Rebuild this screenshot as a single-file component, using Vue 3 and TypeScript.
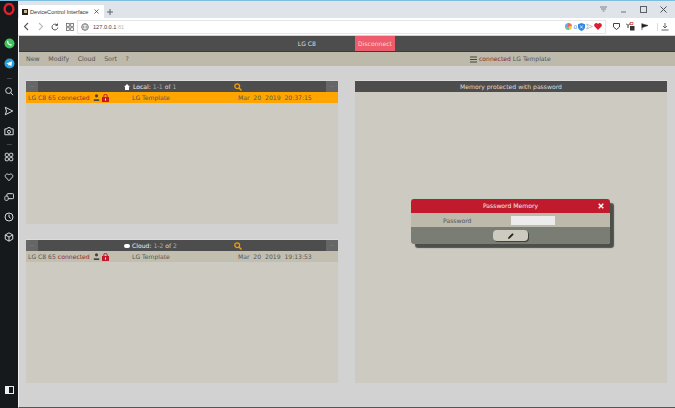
<template>
  <div class="window">
    <aside class="rail">
      <svg class="rail-logo" width="12" height="12" viewBox="0 0 12 12"><ellipse cx="6" cy="6" rx="4.4" ry="5" fill="none" stroke="#e0202c" stroke-width="2.4" /></svg>
      <svg class="rail-app" width="11" height="11" viewBox="0 0 12 12"><circle cx="6" cy="6" r="5.5" fill="#3fc35a" /><path d="M3.6 3.4c1-1 1.4.8 1.2 1.2-.3.5 1.6 2.5 2.2 2.2.5-.3 2 .3 1.4 1.2-1.6 1.8-6.4-2.6-4.8-4.6z" fill="#fff" /></svg>
      <svg class="rail-app" width="11" height="11" viewBox="0 0 12 12"><circle cx="6" cy="6" r="5.5" fill="#2a9fdb" /><path d="M2.5 6L9 3.5 8 9 6 7.500 5 8.500 4.600 6.700z" fill="#fff" /></svg>
      <div class="rail-sep"></div>
      <svg v-for="ic in railTop" :key="ic" class="rail-ico" width="10" height="10" viewBox="0 0 12 12" v-html="ic"></svg>
      <div class="rail-sep"></div>
      <svg v-for="ic in railBottom" :key="ic" class="rail-ico" width="10" height="10" viewBox="0 0 12 12" v-html="ic"></svg>
      <svg class="rail-panel" width="9" height="8" viewBox="0 0 9 8"><rect x=".5" y=".5" width="8" height="7" fill="none" stroke="#eee" /><rect x="1" y="1" width="3" height="6" fill="#eee" /></svg>
    </aside>

    <div class="browser">
      <div class="tabstrip">
        <div class="tab">
          <span class="favicon"><i></i></span>
          <span class="tab-title">DeviceControl Interface</span>
          <svg class="tab-x" width="5" height="5" viewBox="0 0 5 5"><path d="M.5.5l4 4M4.500.5l-4 4" stroke="#444" stroke-width=".8" /></svg>
        </div>
        <svg class="tab-new" width="6" height="6" viewBox="0 0 6 6"><path d="M3 0v6M0 3h6" stroke="#444" stroke-width=".8" /></svg>
        <div class="win-btns">
          <svg width="7" height="7" viewBox="0 0 7 7"><path d="M0 1h7M1 3h5M2.5 5h2" stroke="#7a828a" stroke-width="1.2" /></svg>
          <svg width="7" height="7" viewBox="0 0 7 7"><path d="M1 6h5" stroke="#6a7076" /></svg>
          <svg width="7" height="7" viewBox="0 0 7 7"><rect x=".5" y=".5" width="6" height="6" fill="none" stroke="#5a6066" /></svg>
          <svg width="7" height="7" viewBox="0 0 7 7"><path d="M.5.5l6 6M6.500.5l-6 6" stroke="#4a5056" /></svg>
        </div>
      </div>

      <div class="toolbar">
        <svg width="7" height="9" viewBox="0 0 7 9"><path d="M5 1L1.500 4.500 5 8" fill="none" stroke="#555" stroke-width="1.1" /></svg>
        <svg width="7" height="9" viewBox="0 0 7 9"><path d="M2 1l3.500 3.500L2 8" fill="none" stroke="#bbb" stroke-width="1.1" /></svg>
        <svg width="8" height="8" viewBox="0 0 8 8"><path d="M6.800 4.500A2.900 2.900 0 1 1 6 2M6.500.5v2h-2" fill="none" stroke="#555" /></svg>
        <svg width="8" height="8" viewBox="0 0 8 8"><g fill="none" stroke="#666" stroke-width=".8"><rect x=".5" y=".5" width="2.800" height="2.800" /><rect x="4.700" y=".5" width="2.800" height="2.800" /><rect x=".5" y="4.700" width="2.800" height="2.800" /><rect x="4.700" y="4.700" width="2.800" height="2.800" /></g></svg>
        <div class="urlbar">
          <svg width="8" height="8" viewBox="0 0 8 8"><circle cx="4" cy="4" r="3.300" fill="none" stroke="#777" /><path d="M.7 4h6.600M4 .7c-2 2-2 4.600 0 6.600M4 .7c2 2 2 4.600 0 6.600" fill="none" stroke="#777" stroke-width=".6" /></svg>
          <span class="url">127.0.0.1<span class="url-port">:81</span></span>
          <span class="spacer"></span>
          <span class="ext-wheel"></span>
          <span class="ext-num">0</span>
          <svg width="7" height="8" viewBox="0 0 7 8"><path d="M3.500 0L7 1.200V4c0 2-1.500 3.300-3.500 4C1.500 7.300 0 6 0 4V1.200z" fill="#2f86e0" /><path d="M2.200 2.500l2.600 3M4.800 2.500l-2.600 3" stroke="#fff" stroke-width=".7" /></svg>
          <svg width="7" height="7" viewBox="0 0 7 7"><path d="M.5 1l6 2.500-6 2.500 1.500-2.500z" fill="none" stroke="#aaa" stroke-width=".7" /></svg>
          <svg width="8" height="7" viewBox="0 0 8 7"><path d="M4 7L.6 3.500C-.6 1.800.8 0 2.200 0 3 0 3.600.4 4 1 4.400.4 5 0 5.800 0 7.200 0 8.600 1.800 7.400 3.500z" fill="#d8202e" /></svg>
        </div>
        <div class="tool-ext">
          <svg width="7" height="7" viewBox="0 0 7 7"><path d="M.5.5h6V4L3.500 6.500.5 4z" fill="#fff" stroke="#444" /></svg>
          <svg width="9" height="9" viewBox="0 0 9 9"><path d="M0 1.500l2 2 2-2M2 3.500V6" fill="none" stroke="#333" /><path d="M4 .5h3v2H4z" fill="none" stroke="#b33" stroke-width=".7" /><rect x="4" y="4" width="4.500" height="4.500" fill="#333" /></svg>
          <svg width="7" height="7" viewBox="0 0 7 7"><path d="M1 0v7M1 1l6 1.500L1 4.500z" fill="#222" stroke="#222" stroke-width=".6" /></svg>
          <span class="tool-div"></span>
          <svg width="8" height="8" viewBox="0 0 8 8"><path d="M4 0v5M2 3l2 2 2-2M.5 7h7" fill="none" stroke="#666" /></svg>
        </div>
      </div>

      <div class="page">
        <header class="app-head">
          <div class="app-title">LG C8</div>
          <button class="disconnect">Disconnect</button>
        </header>
        <nav class="menu">
          <div class="menu-items">
            <span v-for="m in menu" :key="m">{{ m }}</span>
          </div>
          <div class="menu-state">
            <svg width="7" height="7" viewBox="0 0 7 7"><path d="M0 1h7M0 3.500h7M0 6h7" stroke="#444" stroke-width="1.1" /></svg>
            <span><span class="red">connected</span> LG Template</span>
          </div>
        </nav>

        <main class="content">
          <div class="col">
            <section v-for="list in lists" :key="list.name" class="panel" :class="list.name">
              <div class="panel-head">
                <span class="sq">—</span>
                <span class="panel-title">
                  <svg v-if="list.name === 'local'" class="title-ico" width="6" height="6" viewBox="0 0 6 6"><path d="M3 0l3 3H5v3H1V3H0z" fill="#fff" /></svg>
                  <span v-else class="cloud-ico"></span>
                  <b>{{ list.label }}:</b> <em>{{ list.range }}</em> of <em>{{ list.total }}</em>
                </span>
                <svg class="search" width="8" height="8" viewBox="0 0 8 8"><circle cx="3.2" cy="3.2" r="2.400" fill="none" stroke="#f0a000" stroke-width="1.3" /><path d="M5 5l2.500 2.500" stroke="#f0a000" stroke-width="1.5" /></svg>
                <span class="sq">—</span>
              </div>
              <div class="row" :class="{ selected: list.selected }">
                <span class="r-name">
                  <span>LG C8 65 <span class="red">connected</span></span>
                  <svg class="ico-user" width="7" height="7" viewBox="0 0 7 7"><circle cx="3.500" cy="1.800" r="1.600" fill="#444" /><path d="M.8 7V5.300h5.400V7z" fill="#444" /></svg>
                  <svg class="ico-lock" width="7" height="8" viewBox="0 0 7 8"><path d="M1.800 3.500V2a1.700 1.700 0 0 1 3.400 0v1.500" fill="none" stroke="#c01a2c" /><rect y="3" width="7" height="5" fill="#c01a2c" /><rect x="3" y="4.500" width="1" height="2" fill="#fff" /></svg>
                </span>
                <span class="r-tpl">LG Template</span>
                <span class="r-date">{{ list.date }}</span>
              </div>
            </section>
          </div>

          <section class="panel memory">
            <div class="panel-head center">Memory protected with password</div>
            <div class="dialog">
              <div class="dialog-head">
                Password Memory
                <svg class="dialog-x" width="6" height="6" viewBox="0 0 6 6"><path d="M.7.7l4.600 4.600M5.300.7L.7 5.300" stroke="#fff" stroke-width="1.4" /></svg>
              </div>
              <div class="dialog-row">
                <label>Password</label>
                <input type="password" />
              </div>
              <div class="dialog-foot">
                <button class="pen-btn">
                  <svg width="6" height="6" viewBox="0 0 6 6"><path d="M0 6l.4-1.700L4.400.3l1.300 1.300-4 4z" fill="#222" /></svg>
                </button>
              </div>
            </div>
          </section>
        </main>
      </div>
    </div>
  </div>
</template>

<script setup lang="ts">
const menu = ['New', 'Modify', 'Cloud', 'Sort', '?']

const lists = [
  { name: 'local', label: 'Local', range: '1-1', total: '1', selected: true, date: 'Mar  20  2019  20:37:15' },
  { name: 'cloud', label: 'Cloud', range: '1-2', total: '2', selected: false, date: 'Mar  20  2019  19:13:53' },
]

const s = 'fill="none" stroke="#d8dcdc" stroke-width="1.2"'
const railTop = [
  `<circle cx="5.5" cy="5.5" r="3.5" ${s} stroke-width="1.5"/><path d="M8 8l3 3" ${s} stroke-width="1.5"/>`,
  `<path d="M1.500 1.500l9 4.500-9 4.500 1.500-4.500z" ${s}/>`,
  `<path d="M1 3.500h2.500l1-1.500h3l1 1.500H11v7H1z" ${s}/><circle cx="6" cy="7" r="1.800" ${s}/>`,
]
const railBottom = [
  `<rect x="1.500" y="1.500" width="3.800" height="3.800" rx="1" ${s}/><rect x="6.700" y="1.500" width="3.800" height="3.800" rx="1" ${s}/><rect x="1.500" y="6.700" width="3.800" height="3.800" rx="1" ${s}/><rect x="6.700" y="6.700" width="3.800" height="3.800" rx="1" ${s}/>`,
  `<path d="M6 10.500L1.800 6C.2 3.800 3.800 .8 6 3.500 8.200 .8 11.800 3.800 10.200 6z" ${s}/>`,
  `<rect x="3.500" y="2" width="8" height="6" rx="1" ${s}/><rect x="1" y="5" width="4" height="5" rx="1" fill="#15191b" stroke="#d8dcdc"/>`,
  `<circle cx="6" cy="6" r="4.800" ${s}/><path d="M6 3v3l2 1.500" ${s}/>`,
  `<path d="M6 1l4.500 2.500v5L6 11 1.500 8.500v-5zM1.500 3.500L6 6l4.500-2.500M6 6v5" ${s}/>`,
]
</script>

<style>
html, body { margin: 0; height: 100%; overflow: hidden; }
</style>

<style scoped>
.window {
  display: flex;
  width: 675px;
  height: 408px;
  box-sizing: border-box;
  border-top: 1px solid #7cbde0;
  font-family: "DejaVu Sans", sans-serif;
  font-size: 6.1px;
  color: #555;
  overflow: hidden;
}
.rail {
  width: 18px;
  flex: none;
  background: #15191b;
  display: flex;
  flex-direction: column;
  align-items: center;
  position: relative;
  box-sizing: border-box;
  padding-top: 2px;
}
.rail-logo { margin-bottom: 23px; }
.rail-app { margin-bottom: 9px; }
.rail-sep { width: 5px; height: 1px; background: #444; margin: -2px 0 7px; }
.rail-app + .rail-sep { margin-top: 0; }
.rail-ico { margin-bottom: 10px; }
.rail-panel { position: absolute; left: 5px; bottom: 14px; }

.browser { flex: 1; display: flex; flex-direction: column; min-width: 0; }
.tabstrip {
  height: 17px;
  background: #dfe4ea;
  display: flex;
  align-items: flex-end;
  flex: none;
}
.tab {
  width: 85px;
  height: 13px;
  background: #fff;
  margin-left: 1px;
  display: flex;
  align-items: center;
  padding-left: 3px;
  box-sizing: border-box;
  font-family: "Liberation Sans", sans-serif;
  font-size: 5.6px;
  color: #333;
}
.favicon { width: 6px; height: 6px; background: #222; margin-right: 2px; display: flex; align-items: center; justify-content: center; }
.favicon i { width: 3px; height: 3px; background: #c9b98a; display: block; }
.tab-title { flex: 1; white-space: nowrap; }
.tab-x { margin-right: 5px; }
.tab-new { margin: 0 0 3px 3px; }
.win-btns { margin-left: auto; align-self: flex-start; display: flex; gap: 13px; padding: 5px 8px 0 0; }

.toolbar {
  height: 18px;
  flex: none;
  background: #fff;
  border-bottom: 1px solid #cfd2d5;
  box-sizing: border-box;
  display: flex;
  align-items: center;
  gap: 7px;
  padding-left: 5px;
}
.urlbar {
  flex: 1;
  height: 14px;
  background: #fff;
  border: 1px solid #e6e6e6;
  box-sizing: border-box;
  display: flex;
  align-items: center;
  gap: 1px;
  padding: 0 3px;
  margin-left: -4px;
}
.url { font-family: "Liberation Sans", sans-serif; font-size: 5.6px; color: #444; margin-left: 3px; }
.url-port { color: #bbb; }
.spacer { flex: 1; }
.ext-wheel { width: 7px; height: 7px; border-radius: 50%; background: conic-gradient(#e66 0 25%, #ec4 0 50%, #6c8 0 75%, #6ad 0); margin-right: 1px; }
.ext-num { font-size: 5.5px; color: #2f86e0; }
.tool-ext { display: flex; align-items: center; gap: 6px; padding-right: 6px; }
.tool-div { width: 1px; height: 8px; background: #ddd; margin: 0 -3px 0 3px; }

.page { flex: 1; background: #d2d2d2; border-left: 1px solid #f2f2f2; border-bottom: 1px solid #555; display: flex; flex-direction: column; min-height: 0; }
.app-head {
  height: 16px;
  flex: none;
  background: #4d4d4d;
  border-bottom: 1px solid #3a3a3a;
  box-sizing: border-box;
  display: flex;
  color: #ddd;
}
.app-title { width: 336px; box-sizing: border-box; text-align: right; line-height: 15px; padding-right: 39px; }
.disconnect {
  width: 40px;
  border: none;
  padding: 0;
  background: #ee5c6c;
  color: #f8d4da;
  font: inherit;
}
.menu {
  height: 14px;
  flex: none;
  background: #bdb9ab;
  display: flex;
  align-items: center;
  line-height: 14px;
}
.menu-items { width: 336px; display: flex; gap: 8.5px; padding-left: 7px; box-sizing: border-box; font-size: 6.3px; }
.menu-state { margin-left: 115px; display: flex; align-items: center; gap: 2px; }
.red { color: #8f2a2a; }

.content {
  flex: 1;
  display: flex;
  gap: 17px;
  padding: 15px 8px 24px 7px;
  min-height: 0;
}
.col { width: 312px; display: flex; flex-direction: column; gap: 16px; }
.panel { background: #cdcac2; display: flex; flex-direction: column; position: relative; box-shadow: 0 -1px 0 #dcdcdc; }
.local { height: 143px; flex: none; }
.cloud { flex: 1; }
.memory { flex: 1; }
.panel-head {
  height: 11px;
  flex: none;
  background: #4d4d4d;
  color: #ddd;
  display: flex;
  align-items: center;
  line-height: 11px;
}
.panel-head.center { justify-content: center; }
.sq {
  width: 12px;
  height: 100%;
  background: #666;
  color: #888;
  text-align: center;
  font-size: 5px;
}
.panel-title { margin-left: 86px; white-space: nowrap; }
.panel-title b { font-weight: normal; color: #eee; }
.panel-title em { font-style: normal; color: #aaa; }
.title-ico { margin-right: 3px; vertical-align: -0.5px; }
.cloud-ico { display: inline-block; width: 6px; height: 4px; background: #fff; border-radius: 2px; margin-right: 2px; }
.search { margin-left: auto; margin-right: 84px; }
.row {
  height: 11px;
  flex: none;
  background: #c2bfb1;
  display: flex;
  align-items: center;
  line-height: 11px;
  white-space: pre;
}
.row.selected { background: #ffa500; }
.r-name { width: 106px; padding-left: 2px; box-sizing: border-box; display: flex; align-items: center; }
.ico-user { margin-left: 3px; }
.ico-lock { margin-left: 2px; }
.r-tpl { width: 106px; }
.dialog {
  position: absolute;
  left: 56px;
  top: 118px;
  width: 199px;
  box-shadow: 0 -1px 0 #b9cdbd, 4px 4px 1px #4d4f4a;
  border-radius: 3px;
}
.dialog-head {
  height: 14px;
  background: #c01a2c;
  border-radius: 3px 3px 0 0;
  color: #eee;
  text-align: center;
  line-height: 14px;
  position: relative;
}
.dialog-x { position: absolute; right: 6px; top: 4px; }
.dialog-row {
  height: 14px;
  background: #bdb9ab;
  display: flex;
  align-items: center;
}
.dialog-row label { width: 100px; padding-left: 32px; box-sizing: border-box; }
.dialog-row input {
  width: 44px;
  height: 9px;
  padding: 0;
  border: none;
  background: #ececec;
}
.dialog-foot {
  height: 17px;
  background: #7a7d73;
  border-radius: 0 0 3px 3px;
  display: flex;
  align-items: center;
  justify-content: center;
}
.pen-btn {
  width: 35px;
  height: 11px;
  padding: 0;
  border: none;
  border-radius: 4px;
  background: #cdcac0;
  box-shadow: 1px 1px 0 #3f413c;
  display: flex;
  align-items: center;
  justify-content: center;
}
</style>
